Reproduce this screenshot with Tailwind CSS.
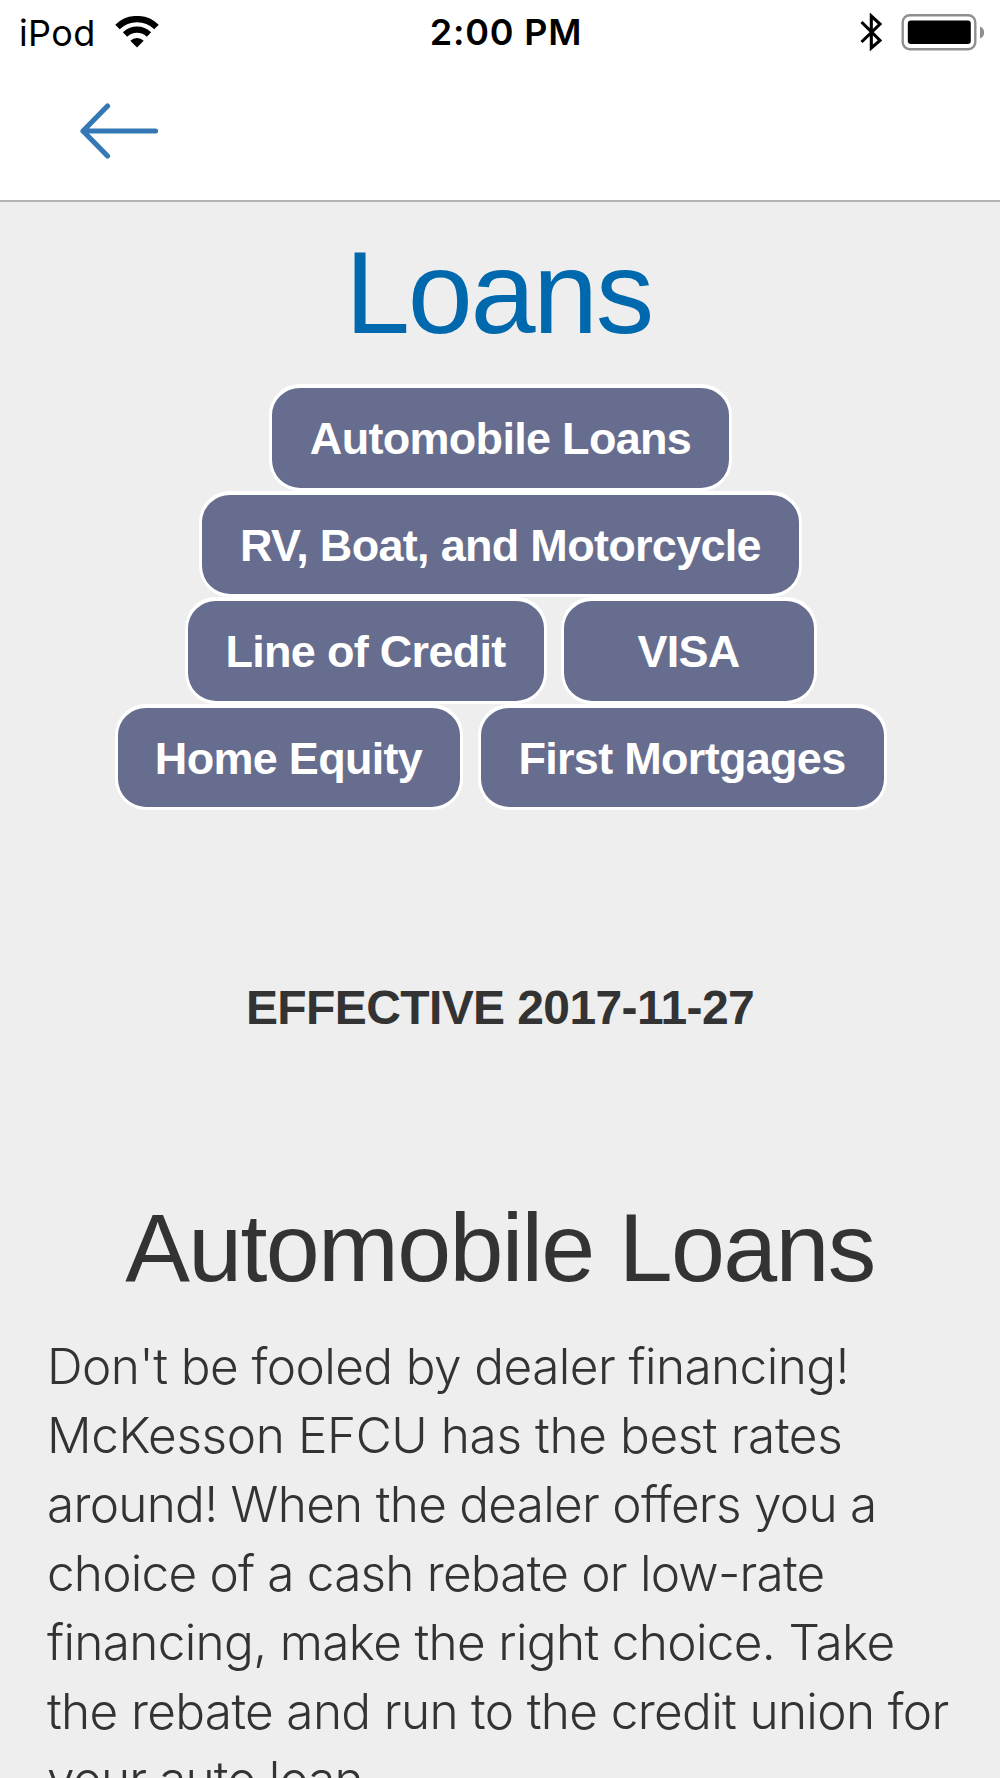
<!DOCTYPE html>
<html lang="en">
<head>
  <meta charset="utf-8">
  <meta name="viewport" content="width=device-width, initial-scale=1">
  <title>Loans</title>
  <script src="https://cdn.jsdelivr.net/npm/@tailwindcss/browser@4"></script>
</head>
<body class="bg-[#eeeeee] text-[#333333] font-['Liberation_Sans',Arial,sans-serif]">
  <div class="w-[1000px] h-[1778px] overflow-hidden">

    <!-- Header -->
    <header class="h-[202px] bg-white border-b-2 border-[#b4b4b4]">
      <div class="grid grid-cols-3 items-center h-16 pl-[19px] pr-[15px] text-black text-[36px] leading-none font-['Inter',sans-serif]">
        <div class="flex items-center gap-[19px]">
          <span class="pt-px text-[36px] tracking-[0.4px]">iPod</span>
          <svg class="w-[44px] h-[32px]" viewBox="0 0 44 32">
            <path d="M2.5 11A28 28 0 0 1 41.5 11" fill="none" stroke="#000" stroke-width="6.4"/>
            <path d="M10 18.5A17.3 17.3 0 0 1 34 18.5" fill="none" stroke="#000" stroke-width="6.2"/>
            <path d="M22 31.5L15.3 24.8A9.6 9.6 0 0 1 28.7 24.8Z"/>
          </svg>
        </div>
        <div class="pl-[8px] text-center"><span class="font-semibold tracking-[0.8px] whitespace-nowrap">2:00 PM</span></div>
        <div class="flex items-center justify-end gap-[19px]">
          <svg class="w-[22px] h-[38px]" viewBox="0 0 22 38" fill="none" stroke="#000" stroke-width="3.1">
            <path d="M1.5 9L20 27.5L11.3 35V3L20 11L1.5 29"/>
          </svg>
          <svg class="w-[84px] h-[37px]" viewBox="0 0 84 37">
            <rect x="1.7" y="1.2" width="72.6" height="34" rx="7" fill="#fff" stroke="#8f8f8f" stroke-width="2.4"/>
            <rect x="6.8" y="6.5" width="63" height="23.5" rx="3"/>
            <path d="M79 12.5C84.5 14 84.5 23 79 24.5Z" fill="#8f8f8f"/>
          </svg>
        </div>
      </div>
      <a href="#" class="block w-[78px] mt-[38px] ml-20">
        <svg class="w-[78px] h-[57px]" viewBox="0 0 78 57" fill="none" stroke="#3478b5" stroke-width="5.2" stroke-linecap="round" stroke-linejoin="round">
          <path d="M27.5 4L3 29L27.5 54M3 29H75.5"/>
        </svg>
      </a>
    </header>

    <!-- Loans -->
    <main class="text-center">
      <h1 class="h-[182px] pt-[31px] pr-[3px] text-[117px] leading-[120px] text-[#0068ad]"><span class="tracking-[-2.4px]">Loans</span></h1>

      <nav class="flex flex-col items-center pl-px text-white text-[45px] font-bold whitespace-nowrap tracking-[-0.7px]">
        <a href="#" class="flex items-center justify-center w-[463px] h-[106.5px] pt-0.5 bg-[#676d8e] border-3 border-t-4 border-white rounded-[31px]">Automobile Loans</a>
        <a href="#" class="flex items-center justify-center w-[603px] h-[106.5px] pt-0.5 bg-[#676d8e] border-3 border-t-4 border-white rounded-[31px]">RV, Boat, and Motorcycle</a>
        <div class="flex gap-[14px]">
          <a href="#" class="flex items-center justify-center w-[362px] h-[106.5px] pt-0.5 bg-[#676d8e] border-3 border-t-4 border-white rounded-[31px]">Line of Credit</a>
          <a href="#" class="flex items-center justify-center w-[256px] h-[106.5px] pt-0.5 bg-[#676d8e] border-3 border-t-4 border-white rounded-[31px]">VISA</a>
        </div>
        <div class="flex gap-[15px]">
          <a href="#" class="flex items-center justify-center w-[348px] h-[106.5px] pt-0.5 bg-[#676d8e] border-3 border-t-4 border-white rounded-[31px]">Home Equity</a>
          <a href="#" class="flex items-center justify-center w-[409px] h-[106.5px] pt-0.5 bg-[#676d8e] border-3 border-t-4 border-white rounded-[31px]">First Mortgages</a>
        </div>
      </nav>

      <p class="mt-[168px] text-[48px] leading-[60px] font-bold tracking-[-0.6px]">EFFECTIVE 2017-11-27</p>

      <h2 class="mt-[155px] text-[97px] leading-[110px] tracking-[-1.7px] whitespace-nowrap">Automobile Loans</h2>

      <p class="mt-[29px] pl-[47px] text-left text-[49.5px] leading-[68.9px] font-light whitespace-nowrap font-['Inter',sans-serif]">
        <span class="tracking-[-0.58px]">Don't be fooled by dealer financing!</span><br>
        <span class="tracking-[-0.4px]">McKesson EFCU has the best rates</span><br>
        <span class="tracking-[-0.73px]">around! When the dealer offers you a</span><br>
        <span class="tracking-[-0.8px]">choice of a cash rebate or low-rate</span><br>
        <span class="tracking-[-0.67px]">financing, make the right choice. Take</span><br>
        <span class="tracking-[-0.66px]">the rebate and run to the credit union for</span><br>
        <span class="tracking-[-0.9px]">your auto loan.</span>
      </p>
    </main>
  </div>
</body>
</html>
